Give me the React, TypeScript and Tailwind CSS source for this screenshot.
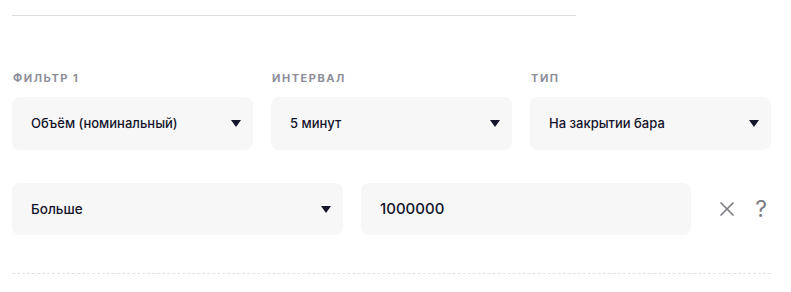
import { X } from 'lucide-react';

const filtry = [
  { zagolovok: 'Фильтр 1', znachenie: 'Объём (номинальный)' },
  { zagolovok: 'Интервал', znachenie: '5 минут' },
  { zagolovok: 'Тип', znachenie: 'На закрытии бара' },
];

function Strelka() {
  return (
    <svg width="10" height="7" viewBox="0 0 10 7" className="shrink-0">
      <path d="M0 0 H10 L5 7 Z" fill="#14142b" />
    </svg>
  );
}

function Vybor({ tekst }: { tekst: string }) {
  return (
    <div className="flex h-[53px] items-center justify-between rounded-lg bg-[#f7f7f8] pl-[19px] pr-[12px]">
      <span className="text-[13px] font-medium text-[#14142b]">{tekst}</span>
      <Strelka />
    </div>
  );
}

export default function App() {
  return (
    <div className="h-[292px] w-[791px] overflow-hidden bg-white pl-3 pr-5 font-['Inter','Noto_Sans',sans-serif]">
      <div className="pt-[15px]">
        <div className="w-[564px] border-t border-[#dddddd]" />
      </div>

      <div className="mt-[55px] grid grid-cols-3 gap-x-[18px]">
        {filtry.map((f) => (
          <div key={f.zagolovok}>
            <div className="mb-[12px] pl-px text-[11px] leading-[14px] font-bold tracking-[0.14em] text-[#8e8e9a] uppercase">
              {f.zagolovok}
            </div>
            <Vybor tekst={f.znachenie} />
          </div>
        ))}
      </div>

      <div className="mt-[33px] flex items-center gap-[18px]">
        <div className="w-[331px]">
          <div className="flex h-[52px] items-center justify-between rounded-lg bg-[#f7f7f8] pl-[19px] pr-[12px]">
            <span className="text-[13.5px] font-medium text-[#14142b]">Больше</span>
            <Strelka />
          </div>
        </div>
        <div className="flex h-[52px] w-[330px] items-center rounded-lg bg-[#f7f7f8] pl-[19px]">
          <span className="text-[15px] font-medium text-[#14142b]">1000000</span>
        </div>
        <div className="flex flex-1 items-center justify-end gap-[16px] pr-[4px]">
          <X className="h-[24px] w-[24px] text-[#7d7d85]" strokeWidth={1.7} />
          <span className="text-[23px] leading-none text-[#7d7d85]">?</span>
        </div>
      </div>

      <div className="mt-[38px] border-t border-dashed border-[#e2e2e2]" />
    </div>
  );
}
